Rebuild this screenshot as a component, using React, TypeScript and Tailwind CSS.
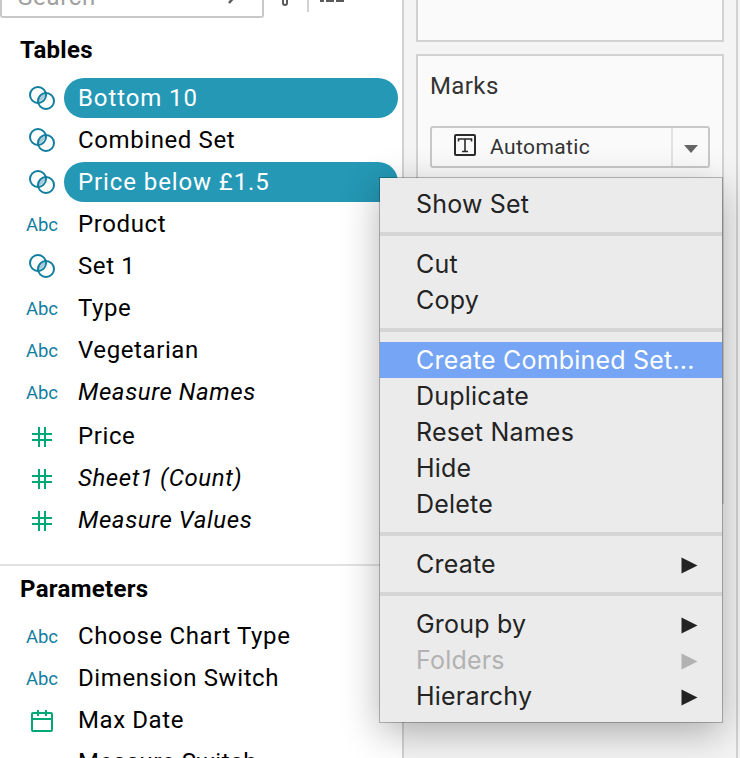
import clsx from "clsx";

type FieldIcon = "set" | "abc" | "number" | "date" | "none";

type Field = {
  name: string;
  icon: FieldIcon;
  tracking: string;
  selected?: boolean;
  italic?: boolean;
};

type MenuEntry = {
  label: string;
  tracking: string;
  submenu?: boolean;
  disabled?: boolean;
  active?: boolean;
};

const dimensions: Field[] = [
  { name: "Bottom 10", icon: "set", tracking: "tracking-[0.9px]", selected: true },
  { name: "Combined Set", icon: "set", tracking: "tracking-[0.6px]" },
  { name: "Price below £1.5", icon: "set", tracking: "tracking-[0.9px]", selected: true },
  { name: "Product", icon: "abc", tracking: "tracking-[0.6px]" },
  { name: "Set 1", icon: "set", tracking: "tracking-[0.6px]" },
  { name: "Type", icon: "abc", tracking: "tracking-[0.6px]" },
  { name: "Vegetarian", icon: "abc", tracking: "tracking-[0.6px]" },
  { name: "Measure Names", icon: "abc", tracking: "tracking-[0.6px]", italic: true },
];

const measures: Field[] = [
  { name: "Price", icon: "number", tracking: "tracking-[0.6px]" },
  { name: "Sheet1 (Count)", icon: "number", tracking: "tracking-[0.6px]", italic: true },
  { name: "Measure Values", icon: "number", tracking: "tracking-[0.6px]", italic: true },
];

const parameters: Field[] = [
  { name: "Choose Chart Type", icon: "abc", tracking: "tracking-[0.6px]" },
  { name: "Dimension Switch", icon: "abc", tracking: "tracking-[0.6px]" },
  { name: "Max Date", icon: "date", tracking: "tracking-[0.6px]" },
  { name: "Measure Switch", icon: "none", tracking: "tracking-[0.6px]" },
];

const menuGroups: MenuEntry[][] = [
  [{ label: "Show Set", tracking: "tracking-[0.2px]" }],
  [
    { label: "Cut", tracking: "tracking-[0.2px]" },
    { label: "Copy", tracking: "tracking-[0.2px]" },
  ],
  [
    { label: "Create Combined Set...", tracking: "tracking-[0.2px]", active: true },
    { label: "Duplicate", tracking: "tracking-[0.2px]" },
    { label: "Reset Names", tracking: "tracking-[0.2px]" },
    { label: "Hide", tracking: "tracking-[0.2px]" },
    { label: "Delete", tracking: "tracking-[0.2px]" },
  ],
  [{ label: "Create", tracking: "tracking-[0.2px]", submenu: true }],
  [
    { label: "Group by", tracking: "tracking-[0.2px]", submenu: true },
    { label: "Folders", tracking: "tracking-[0.2px]", submenu: true, disabled: true },
    { label: "Hierarchy", tracking: "tracking-[0.2px]", submenu: true },
  ],
];

function Icon({ type }: { type: FieldIcon }) {
  if (type === "abc") {
    return (
      <span className="pt-[3px] text-[18.5px] leading-none tracking-[-0.1px] text-[#127e9f]">
        Abc
      </span>
    );
  }
  if (type === "set") {
    return (
      <svg width="28" height="26" viewBox="0 0 28 26" fill="none" className="mt-0.5">
        <path
          d="M9.9 15.8 A8 8 0 0 1 17.1 8.2 A8 8 0 0 1 9.9 15.8Z"
          fill="#a9cbd9"
        />
        <circle cx="10" cy="9" r="8" stroke="#127e9f" strokeWidth="2" />
        <circle cx="18" cy="15" r="8" stroke="#127e9f" strokeWidth="2" />
      </svg>
    );
  }
  if (type === "number") {
    return (
      <svg width="20" height="20" viewBox="0 0 20 20" className="mt-0.5">
        <path d="M6 0h2v20H6zM12 0h2v20h-2zM0 6h20v2H0zM0 12h20v2H0z" fill="#00a878" />
      </svg>
    );
  }
  if (type === "date") {
    return (
      <svg width="22" height="22" viewBox="0 0 22 22" fill="none" className="mt-px">
        <rect x="1" y="3" width="20" height="18" rx="1" stroke="#00a878" strokeWidth="2" />
        <path d="M7 0v6M15 0v6M1 9h20" stroke="#00a878" strokeWidth="2" />
      </svg>
    );
  }
  return null;
}

function FieldRow({ field }: { field: Field }) {
  return (
    <li className="flex h-[42px] items-center">
      <div className="flex w-11 shrink-0 justify-center pl-0">
        <Icon type={field.icon} />
      </div>
      <div
        className={clsx(
          "flex h-10 grow items-center rounded-full pl-3.5 text-[24px] leading-none whitespace-nowrap",
          field.tracking,
          field.italic && "italic",
          field.selected ? "bg-[#2498b5] text-white" : "text-black"
        )}
      >
        {field.name}
      </div>
    </li>
  );
}

function FieldList({ fields }: { fields: Field[] }) {
  return (
    <ul className="pr-1 pl-5">
      {fields.map((field) => (
        <FieldRow key={field.name} field={field} />
      ))}
    </ul>
  );
}

function DataPane() {
  return (
    <aside className="flex w-[402px] shrink-0 flex-col bg-white">
      <div className="flex h-[18px] shrink-0">
        <div className="flex h-[18px] w-[264px] items-end justify-between overflow-hidden rounded-b-[3px] border-2 border-t-0 border-[#c8c8c8] pr-6 pl-4">
          <span className="mb-[7px] text-[24px] leading-none tracking-[0.7px] text-[#a0a0a0]">
            Search
          </span>
          <svg width="10" height="16" viewBox="0 0 10 16" fill="none">
            <path d="M1 3l7-8" stroke="#5a5a5a" strokeWidth="2.5" />
          </svg>
        </div>
        <svg width="74" height="12" viewBox="0 0 74 12" fill="none" className="ml-[6px]">
          <path d="M13 0v3q0 2 2 2t2-2V0" stroke="#5a5a5a" strokeWidth="2" />
          <path d="M38 0v12" stroke="#d2d2d2" strokeWidth="2" />
          <path d="M50 1h4M56 1h8M66 1h8" stroke="#5a5a5a" strokeWidth="2" />
        </svg>
      </div>
      <h2 className="mt-[20px] pl-5 text-[24px] leading-6 font-bold tracking-[0.3px]">Tables</h2>
      <div className="mt-[15px]">
        <FieldList fields={dimensions} />
      </div>
      <div className="ml-3.5 mt-px h-0.5 bg-[#e0e0e0]" />
      <div className="mt-px">
        <FieldList fields={measures} />
      </div>
      <div className="mt-[23px] h-0.5 shrink-0 bg-[#e2e2e2]" />
      <h2 className="mt-[11px] pl-5 text-[24px] leading-6 font-bold tracking-[0.3px]">
        Parameters
      </h2>
      <div className="mt-[14px]">
        <FieldList fields={parameters} />
      </div>
    </aside>
  );
}

function MarksPane() {
  return (
    <section className="flex w-[336px] shrink-0 flex-col border-x-2 border-[#d2d2d2] bg-[#f4f4f4] px-3 text-[#333]">
      <div className="h-[42px] shrink-0 border-2 border-t-0 border-[#d2d2d2] bg-[#fafafa]" />
      <div className="mt-3 h-[450px] shrink-0 border-2 border-[#d2d2d2] bg-[#fafafa] px-3">
        <h3 className="mt-[18px] text-[24px] leading-6 tracking-[0.4px]">Marks</h3>
        <div className="mt-7 flex h-[42px] items-center rounded-[3px] border-2 border-[#c8c8c8]">
          <svg width="22" height="22" viewBox="0 0 22 22" fill="none" className="-mt-1 ml-[22px]">
            <rect x="1" y="1" width="20" height="20" rx="1" stroke="#2b2b2b" strokeWidth="2" />
            <path
              d="M4.5 7.5V5h13v2.5M11 5v12.5M8 17.5h6"
              stroke="#2b2b2b"
              strokeWidth="1.6"
            />
          </svg>
          <span className="ml-3.5 grow text-[21px] leading-none tracking-[0.4px]">Automatic</span>
          <div className="flex h-full w-[37px] items-center justify-center border-l-2 border-[#e2e2e2]">
            <svg width="14" height="8" viewBox="0 0 14 8" className="mt-1">
              <path d="M0 0h14L7 8z" fill="#666" />
            </svg>
          </div>
        </div>
      </div>
    </section>
  );
}

function ContextMenu() {
  return (
    <div className="absolute top-[178px] left-[380px] w-[342px] bg-[#ebebeb] pt-2 pb-2 font-['Inter'] shadow-[0_0_0_1px_rgba(0,0,0,0.25),0_10px_36px_rgba(0,0,0,0.3)]">
      {menuGroups.map((group, index) => (
        <div key={group[0].label}>
          {index > 0 && <div className="mt-[10px] mb-[10px] h-1 bg-[#d5d5d5]" />}
          {group.map((entry) => (
            <div
              key={entry.label}
              className={clsx(
                "flex h-9 items-center justify-between pr-6 pl-9 text-[25px] leading-none whitespace-nowrap",
                entry.tracking,
                entry.active && "bg-[#75a5f4] text-white",
                entry.disabled && "text-[#b2b2b2]",
                !entry.active && !entry.disabled && "text-[#232323]"
              )}
            >
              {entry.label}
              {entry.submenu && (
                <svg width="17" height="17" viewBox="0 0 17 17" className="mt-0.5">
                  <path d="M0.5 0.5L16.5 8.5L0.5 16.5z" fill="currentColor" />
                </svg>
              )}
            </div>
          ))}
        </div>
      ))}
    </div>
  );
}

export default function App() {
  return (
    <div className="relative flex h-[758px] w-[740px] overflow-hidden bg-[#f4f4f4] font-['Roboto',sans-serif]">
      <DataPane />
      <MarksPane />
      <ContextMenu />
    </div>
  );
}
